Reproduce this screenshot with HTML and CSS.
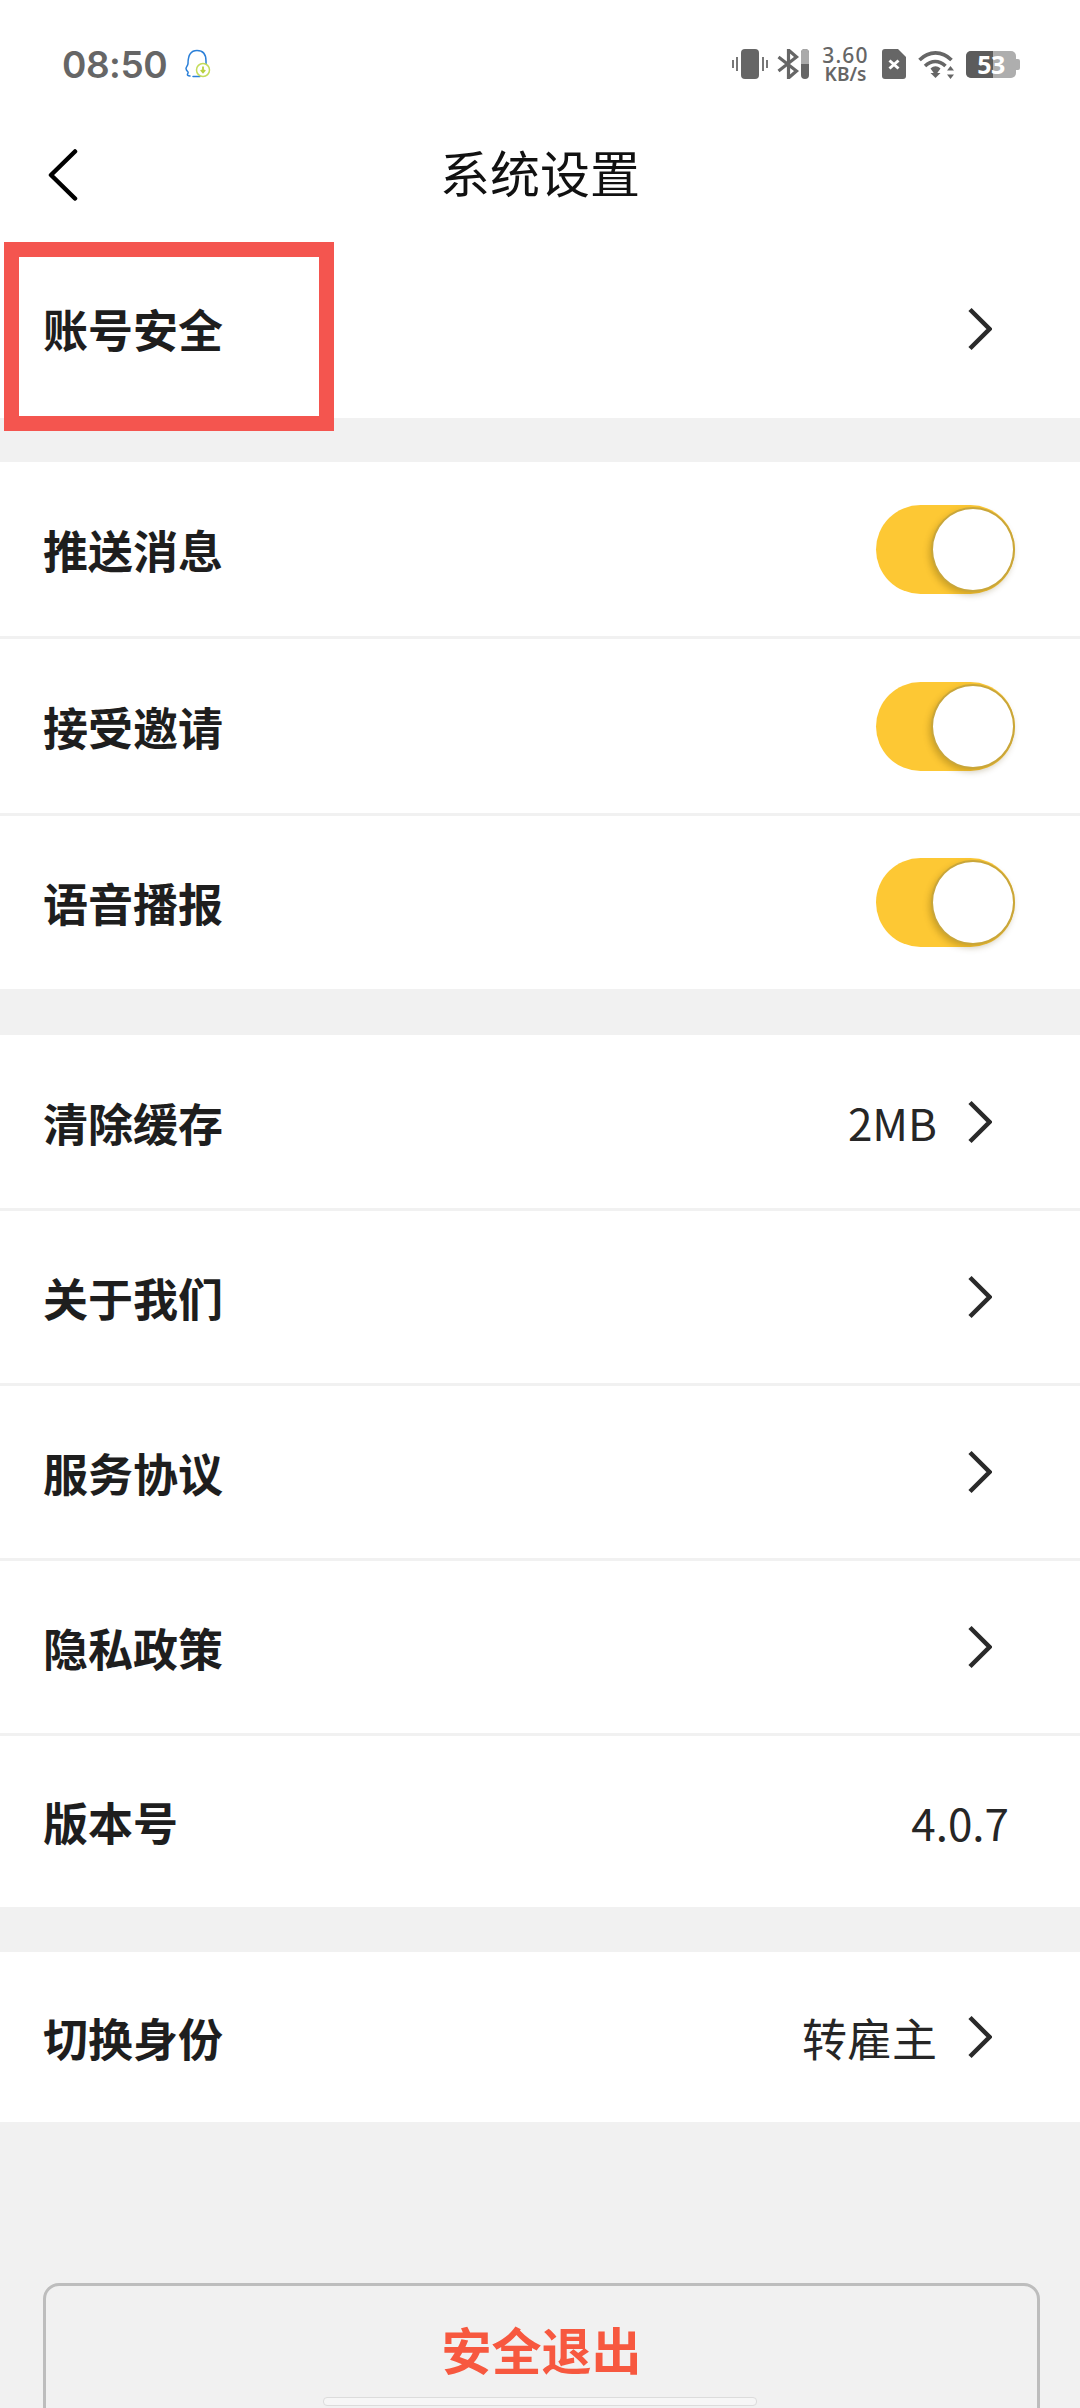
FILE: index.html
```html
<!DOCTYPE html>
<html lang="zh-CN">
<head>
<meta charset="utf-8">
<title>系统设置</title>
<link rel="stylesheet" href="styles.css">
</head>
<body>
<div class="page">
  <div class="top">
    <div class="status">
      <span class="time">08:50</span>
      <svg class="qq" width="28" height="30" viewBox="0 0 28 30">
        <path d="M5 27c-2 0-3-1-2.500-2 .5-1 1-1 .5-2-1-1-2-2-2-3.500 0-1.500 2-3 2-5C3 7 5 1.500 12 1.500S21 7 21 12v4M8 27.500h7" fill="none" stroke="#2a7fd8" stroke-width="1.500" stroke-linecap="round"/>
        <circle cx="18" cy="21" r="6.500" fill="#fff" stroke="#c4dc5a" stroke-width="1.500"/>
        <path d="M18 17.500v5.500M15.800 21l2.200 2.500 2.200-2.500" fill="none" stroke="#b8d040" stroke-width="1.800"/>
      </svg>
      <div class="sys">
        <svg class="i-vib" width="36" height="30" viewBox="0 0 36 30">
          <rect x="9" y="0" width="18" height="30" rx="4" fill="#666"/>
          <path d="M5 8v14M1 11v8M31 8v14M35 11v8" stroke="#777" stroke-width="2"/>
        </svg>
        <svg class="i-bt" width="32" height="30" viewBox="0 0 32 30">
          <path d="M1.500 8l18 14-8 7V1l8 7-18 14" fill="none" stroke="#666" stroke-width="3.200"/>
          <rect x="24" y="0" width="8" height="30" rx="4" fill="#666"/>
          <path d="M24 4a4 4 0 0 1 8 0v11h-8z" fill="#aaa"/>
        </svg>
        <div class="speed"><span class="sp-a">3.60</span><span class="sp-b">KB/s</span></div>
        <svg class="i-sim" width="24" height="30" viewBox="0 0 24 30">
          <path d="M3 0h13l8 8v19a3 3 0 0 1-3 3H3a3 3 0 0 1-3-3V3a3 3 0 0 1 3-3z" fill="#666"/>
          <path d="M7.500 11.500l9 8M16.500 11.500l-9 8" stroke="#fff" stroke-width="3"/>
        </svg>
        <svg class="i-wifi" width="37" height="30" viewBox="0 0 37 30">
          <path d="M1.500 11C11 1.500 24 1.500 33.500 11M7 17c6.500-6 14-6 20.500 0" fill="none" stroke="#666" stroke-width="3.600"/>
          <path d="M12.500 21.500c3.500-3 6.500-3 10 0l-5 7z" fill="#666" transform="translate(0 -2)"/>
          <path d="M12.500 24h10l-5 5z" fill="#666"/>
          <path d="M32.500 17l3.500 4.500h-7zM32.500 30l-3.500-4.500h7z" fill="#666"/>
        </svg>
        <div class="batt"><span class="batt-fill"></span><span class="batt-num">53</span><span class="batt-cap"></span></div>
      </div>
    </div>
    <div class="nav">
      <svg class="back" width="30" height="52" viewBox="0 0 30 52">
        <path d="M27 2.500L3 26l24 23.500" fill="none" stroke="#000" stroke-width="4.500" stroke-linecap="round" stroke-linejoin="round"/>
      </svg>
      <h1 class="title">系统设置</h1>
    </div>
  </div>

  <section class="group g1">
    <div class="row"><span class="label">账号安全</span><span class="right"><svg class="chev" width="26" height="44" viewBox="0 0 26 44"><path d="M4 2.500L23.500 22 4 41.500" fill="none" stroke="#2a2a2a" stroke-width="4.500"/></svg></span></div>
  </section>

  <section class="group g2">
    <div class="row"><span class="label">推送消息</span><span class="toggle"><span class="knob"></span></span></div>
    <div class="row"><span class="label">接受邀请</span><span class="toggle"><span class="knob"></span></span></div>
    <div class="row"><span class="label">语音播报</span><span class="toggle"><span class="knob"></span></span></div>
  </section>

  <section class="group g3">
    <div class="row"><span class="label">清除缓存</span><span class="right"><span class="value value-num">2MB</span><svg class="chev" width="26" height="44" viewBox="0 0 26 44"><path d="M4 2.500L23.500 22 4 41.500" fill="none" stroke="#2a2a2a" stroke-width="4.500"/></svg></span></div>
    <div class="row"><span class="label">关于我们</span><span class="right"><svg class="chev" width="26" height="44" viewBox="0 0 26 44"><path d="M4 2.500L23.500 22 4 41.500" fill="none" stroke="#2a2a2a" stroke-width="4.500"/></svg></span></div>
    <div class="row"><span class="label">服务协议</span><span class="right"><svg class="chev" width="26" height="44" viewBox="0 0 26 44"><path d="M4 2.500L23.500 22 4 41.500" fill="none" stroke="#2a2a2a" stroke-width="4.500"/></svg></span></div>
    <div class="row"><span class="label">隐私政策</span><span class="right"><svg class="chev" width="26" height="44" viewBox="0 0 26 44"><path d="M4 2.500L23.500 22 4 41.500" fill="none" stroke="#2a2a2a" stroke-width="4.500"/></svg></span></div>
    <div class="row"><span class="label">版本号</span><span class="right"><span class="value value-num value-end">4.0.7</span></span></div>
  </section>

  <section class="group g4">
    <div class="row"><span class="label">切换身份</span><span class="right"><span class="value">转雇主</span><svg class="chev" width="26" height="44" viewBox="0 0 26 44"><path d="M4 2.500L23.500 22 4 41.500" fill="none" stroke="#2a2a2a" stroke-width="4.500"/></svg></span></div>
  </section>

  <div class="logout-wrap"><button class="logout">安全退出</button></div>

  <div class="annot"></div>
  <div class="home"></div>
</div>
</body>
</html>
```

FILE: styles.css
```css
* { box-sizing: border-box; }
html, body { margin: 0; padding: 0; }
body { width: 1080px; height: 2408px; overflow: hidden; background: #f1f1f1; font-family: "Noto Sans CJK SC", "Noto Sans", sans-serif; }
.page { position: relative; width: 1080px; height: 2408px; overflow: hidden; display: flex; flex-direction: column; }

.top { height: 242px; background: #fff; display: flex; flex-direction: column; flex: none; }
.status { height: 128px; display: flex; align-items: center; padding: 0 64px 0 62px; }
.time { font-family: "Inter", "Noto Sans", sans-serif; font-weight: 600; font-size: 37px; letter-spacing: -0.5px; color: #666; line-height: 1; }
.qq { margin-left: 18px; }
.sys { margin-left: auto; display: flex; align-items: center; }
.i-bt { margin-left: 9px; }
.speed { margin-left: 13px; width: 47px; display: flex; flex-direction: column; align-items: center; font-family: "Noto Sans", sans-serif; color: #666; line-height: 1; }
.sp-a { font-size: 21px; font-weight: 500; letter-spacing: 1.2px; line-height: 19px; }
.sp-b { font-size: 19px; font-weight: 600; line-height: 18px; }
.i-sim { margin-left: 13px; }
.i-wifi { margin-left: 12px; }
.batt { position: relative; margin-left: 11px; width: 50px; height: 27px; background: #aeaeae; border-radius: 5px; display: flex; align-items: center; justify-content: center; }
.batt-fill { position: absolute; left: 0; top: 0; bottom: 0; width: 27px; background: #5c5c5c; border-radius: 5px 0 0 5px; }
.batt-num { position: relative; font-family: "Noto Sans", sans-serif; font-weight: 700; font-size: 25px; letter-spacing: -0.5px; line-height: 1; color: #fff; }
.batt-cap { position: absolute; right: -4px; top: 8px; width: 4px; height: 11px; background: #aeaeae; border-radius: 0 2px 2px 0; }

.nav { position: relative; height: 90px; display: flex; align-items: center; justify-content: center; }
.back { position: absolute; left: 48px; top: 21px; }
.title { margin: 0 0 5px; font-size: 50px; font-weight: 400; color: #111; line-height: 1; }

.group { background: #fff; display: flex; flex-direction: column; flex: none; }
.g1 { height: 176px; margin-bottom: 44px; }
.g2 { height: 527px; margin-bottom: 46px; }
.g3 { height: 872px; margin-bottom: 45px; padding-top: 1px; }
.g4 { height: 170px; }

.row { flex: 0 0 175px; display: flex; align-items: center; justify-content: space-between; padding: 0 62px 0 43px; border-bottom: 3px solid #f1f1f1; }
.g2 .row { flex-basis: 177px; }
.row:last-child { flex: 1 1 auto; border-bottom: 0; }
.g1 .row { padding-right: 88px; padding-bottom: 3px; }
.g3 .row, .g4 .row { padding-right: 88px; }

.label { font-size: 45px; font-weight: 700; color: #1e1e1e; line-height: 1; }
.right { display: flex; align-items: center; }
.value { font-size: 45px; font-weight: 400; color: #262626; line-height: 1; }
.value-num { font-size: 44px; }
.value-end { margin-right: -17px; }
.chev { margin-left: 29px; }

.toggle { position: relative; width: 139px; height: 89px; background: #fdc834; border-radius: 45px; margin-right: 3px; }
.knob { position: absolute; right: 0; top: 2px; width: 84px; height: 85px; border-radius: 50%; background: #fff; border: 2px solid #c9a63a; box-shadow: -2px 3px 6px rgba(90, 70, 0, 0.28); }

.logout-wrap { padding: 161px 40px 0 43px; flex: none; }
.logout { display: block; width: 100%; height: 170px; padding: 0 0 40px; background: transparent; border: 3px solid #bdbdbd; border-radius: 16px; font-family: "Noto Sans CJK SC", sans-serif; font-size: 50px; font-weight: 700; color: #f7583f; line-height: 1; }

.annot { position: absolute; left: 4px; top: 242px; width: 330px; height: 189px; border: 15px solid #f4554f; }
.home { position: absolute; left: 323px; top: 2397px; width: 434px; height: 9px; background: #f6f6f6; border: 1px solid #dcdcdc; border-radius: 4px; }
```
